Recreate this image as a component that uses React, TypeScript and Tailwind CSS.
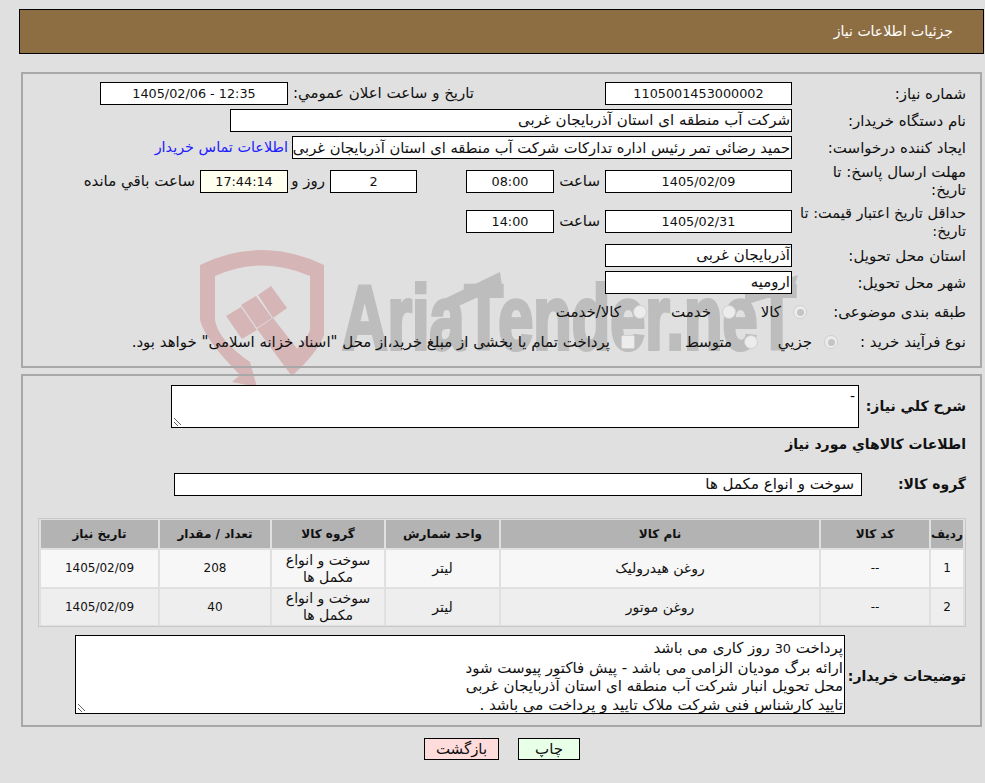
const font = "[font-family:'DejaVu_Sans',Tahoma,sans-serif]"

function Box({ className, children }: { className: string; children?: React.ReactNode }) {
  return (
    <div className={"h-[23px] shrink-0 border border-black leading-[21px] overflow-hidden whitespace-nowrap " + className}>
      {children}
    </div>
  )
}

function Num({ children }: { children: React.ReactNode }) {
  return <span className="text-[12.8px]">{children}</span>
}

function Label({ className, children }: { className?: string; children: React.ReactNode }) {
  return <div className={"w-[188px] shrink-0 pr-[14px] leading-[18px] " + (className || "")}>{children}</div>
}

function Radio({ on }: { on?: boolean }) {
  return (
    <span className="inline-flex h-[14px] w-[14px] shrink-0 items-center justify-center rounded-full border border-[#cfcfcf] bg-[#ececec]">
      {on && <span className="h-[7px] w-[7px] rounded-full bg-[#c4c4c4]" />}
    </span>
  )
}

function Grip() {
  return (
    <span className="absolute bottom-[1px] left-[1px] h-[9px] w-[9px] text-[#666666]">
      <svg viewBox="0 0 9 9" className="h-full w-full" fill="none" stroke="currentColor"><path d="M1 1 L8 8 M1 5 L5 9" /></svg>
    </span>
  )
}

function Watermark() {
  return (
    <svg dir="ltr" className="absolute left-0 top-0 h-[783px] w-[985px]" viewBox="0 0 985 783" aria-hidden="true">
      <g fill="#d6b5b6">
        <path d="M200 265 Q262 235 324 265 L324 335 Q318 352 293 375 L282 360 Q305 345 310 330 L310 276 Q262 255 215 276 L215 320 Q218 340 250 362 L257 387 L232 382 L240 375 Q205 340 200 320 Z" />
        <path d="M226 316 L241 307 L257 330 L242 339 Z" />
        <path d="M241 305 L256 296 L272 318 L257 328 Z" />
        <path d="M258 295 L271 286 L287 308 L273 318 Z" />
        <path d="M257 329 L273 318 L302 355 L291 375 Z" />
      </g>
      <g fill="#bdbdbd">
        <text
          transform="translate(342 349) scale(0.7 1)"
          fontFamily="'Liberation Sans', sans-serif"
          fontWeight="700"
          fontSize="90"
          stroke="#bdbdbd"
          strokeWidth="4"
          direction="ltr"
        >
          AriaTender.neT
        </text>
        <path d="M446 298 L500 272 L502 286 L450 310 Z" />
        <path d="M745 293 L798 275 L793 290 L745 305 Z" />
      </g>
    </svg>
  )
}

function Row({ className, children }: { className?: string; children: React.ReactNode }) {
  return <div className={"flex items-center " + (className || "")}>{children}</div>
}

const items = [
  { id: "1", code: "--", name: "روغن هیدرولیک", unit: "لیتر", group: "سوخت و انواع مکمل ها", qty: "208", date: "1405/02/09", bg: "h-[37px] bg-[#f7f7f7]" },
  { id: "2", code: "--", name: "روغن موتور", unit: "لیتر", group: "سوخت و انواع مکمل ها", qty: "40", date: "1405/02/09", bg: "h-[36px] bg-[#eeeeee]" },
]

export default function App() {
  return (
    <div dir="rtl" className={"relative h-[783px] w-[985px] overflow-hidden bg-[#e0e0e0] text-[15px] text-[#111111] " + font}>
      <div className="mr-[1px] mt-[9px] flex h-[45px] w-[965px] items-center border border-black bg-[#8d6e42] pr-[30px] text-[14px] text-white">
        جزئیات اطلاعات نیاز
      </div>

      <Watermark />

      {/* main fieldset */}
      <div className="relative mr-[3px] mt-[18px] h-[296px] w-[961px] border-2 border-[#a8a8a8] pt-[8px]">
        <div className="flex flex-col gap-[4px]">
          <Row>
            <Label>شماره نیاز:</Label>
            <Box className="w-[187px] bg-white text-center"><Num>1105001453000002</Num></Box>
            <div className="w-[317px] whitespace-nowrap pr-[131px]">تاریخ و ساعت اعلان عمومي:</div>
            <Box className="w-[188px] bg-white text-center"><Num>12:35 - 1405/02/06</Num></Box>
          </Row>
          <Row>
            <Label>نام دستگاه خریدار:</Label>
            <Box className="w-[562px] bg-white pr-[1px]">شرکت آب منطقه ای استان آذربایجان غربی</Box>
          </Row>
          <Row>
            <Label>ایجاد کننده درخواست:</Label>
            <Box className="w-[500px] bg-white pr-[1px] text-[14.7px]">حمید رضائی تمر رئیس اداره تدارکات شرکت آب منطقه ای استان آذربایجان غربی</Box>
            <a className="mr-[4px] whitespace-nowrap text-[14.4px] text-[#2020ff]">اطلاعات تماس خریدار</a>
          </Row>
          <Row className="h-[36px]">
            <Label>مهلت ارسال پاسخ: تا<br />تاریخ:</Label>
            <Box className="w-[187px] bg-white text-center"><Num>1405/02/09</Num></Box>
            <div className="w-[51px] pr-[5px]">ساعت</div>
            <Box className="w-[88px] bg-white text-center"><Num>08:00</Num></Box>
            <div className="w-[49px]" />
            <Box className="w-[87px] bg-white text-center"><Num>2</Num></Box>
            <div className="w-[42px] whitespace-nowrap pr-[5px]">روز و</div>
            <Box className="w-[88px] bg-[#fffff0] text-center"><Num>17:44:14</Num></Box>
            <div className="whitespace-nowrap pr-[5px]">ساعت باقي مانده</div>
          </Row>
          <Row className="h-[37px]">
            <Label className="text-[14.5px]">حداقل تاریخ اعتبار قیمت: تا<br />تاریخ:</Label>
            <Box className="w-[187px] bg-white text-center"><Num>1405/02/31</Num></Box>
            <div className="w-[51px] pr-[5px]">ساعت</div>
            <Box className="w-[88px] bg-white text-center"><Num>14:00</Num></Box>
          </Row>
          <Row>
            <Label>استان محل تحویل:</Label>
            <Box className="w-[187px] bg-white pr-[1px]">آذربایجان غربی</Box>
          </Row>
          <Row>
            <Label>شهر محل تحویل:</Label>
            <Box className="w-[187px] bg-white pr-[1px]">ارومیه</Box>
          </Row>
          <Row className="h-[28px]">
            <Label>طبقه بندی موضوعی:</Label>
            <div className="mr-[-15px] flex items-center">
              <div className="flex w-[71px] items-center gap-[12px]"><Radio on />کالا</div>
              <div className="flex w-[89px] items-center gap-[11px]"><Radio />خدمت</div>
              <div className="flex items-center gap-[12px] whitespace-nowrap"><Radio />کالا/خدمت</div>
            </div>
          </Row>
          <Row className="h-[24px]">
            <Label>نوع فرآیند خرید :</Label>
            <div className="mr-[-46px] flex items-center">
              <div className="flex w-[80px] items-center gap-[12px]"><Radio on />جزیي</div>
              <div className="flex w-[123px] items-center gap-[12px]"><Radio />متوسط</div>
              <div className="flex items-center gap-[11px] whitespace-nowrap">
                <span className="h-[14px] w-[14px] shrink-0 rounded-[2px] border border-[#cfcfcf] bg-[#ececec]" />
                پرداخت تمام یا بخشی از مبلغ خرید،از محل "اسناد خزانه اسلامی" خواهد بود.
              </div>
            </div>
          </Row>
        </div>
      </div>

      {/* items fieldset */}
      <div className="relative mr-[3px] mt-[6px] h-[353px] w-[961px] border-2 border-[#a8a8a8] pt-[9px] text-[14px]">
        <Row className="items-start">
          <div className="w-[121px] pr-[14px] pt-[11px] font-bold">شرح کلي نیاز:</div>
          <div className="relative h-[43px] w-[688px] border border-black bg-white pr-[3px] leading-[20px]">
            -
            <Grip />
          </div>
        </Row>
        <div className="mt-[4px] h-[24px] pr-[14px] font-bold leading-[24px]">اطلاعات کالاهاي مورد نیاز</div>
        <Row className="mt-[17px]">
          <div className="w-[118px] pr-[14px] font-bold">گروه کالا:</div>
          <Box className="w-[688px] bg-white pr-[7px] text-[15px]">سوخت و انواع مکمل ها</Box>
        </Row>
        <div className="mr-[14px] mt-[22px] w-[928px] border border-[#c8c8c8]">
          <table className="-my-px w-full border-separate border-spacing-[2px] text-center">
            <thead>
              <tr className="h-[28px] bg-[#b3b3b3] text-[12px] font-bold">
                <th className="w-[32px] p-0">ردیف</th>
                <th className="w-[108px] p-0">کد کالا</th>
                <th className="w-[318px] p-0">نام کالا</th>
                <th className="w-[113px] p-0">واحد شمارش</th>
                <th className="w-[112px] p-0">گروه کالا</th>
                <th className="w-[110px] p-0">تعداد / مقدار</th>
                <th className="p-0">تاریخ نیاز</th>
              </tr>
            </thead>
            <tbody>
              {items.map((r) => (
                <tr key={r.id} className={"leading-[17px] " + r.bg}>
                  <td className="text-[12px]">{r.id}</td>
                  <td className="text-[12px]">{r.code}</td>
                  <td>{r.name}</td>
                  <td>{r.unit}</td>
                  <td className="px-[12px]">{r.group}</td>
                  <td className="text-[12px]">{r.qty}</td>
                  <td className="text-[12px]">{r.date}</td>
                </tr>
              ))}
            </tbody>
          </table>
        </div>
        <Row className="mt-[8px] items-start">
          <div className="w-[135px] whitespace-nowrap pr-[14px] pt-[31px] font-bold">توضیحات خریدار:</div>
          <div className="relative h-[79px] w-[770px] border border-black bg-white pr-[1px] pt-[3px] text-[15px] leading-[18.5px]">
            <div>پرداخت <Num>30</Num> روز کاری می باشد</div>
            <div>ارائه برگ مودیان الزامی  می باشد - پیش فاکتور پیوست شود</div>
            <div>محل تحویل انبار شرکت آب منطقه ای استان آذربایجان غربی</div>
            <div>تایید کارشناس فنی شرکت ملاک تایید و پرداخت می باشد .</div>
            <Grip />
          </div>
        </Row>
      </div>

      <div className="mt-[11px] flex justify-center gap-[19px] pl-[19px]">
        <button className="h-[22px] w-[62px] border border-black bg-[#e8ffe8] leading-[18px]">چاپ</button>
        <button className="h-[22px] w-[75px] border border-black bg-[#ffdcdc] leading-[18px]">بازگشت</button>
      </div>
    </div>
  )
}
